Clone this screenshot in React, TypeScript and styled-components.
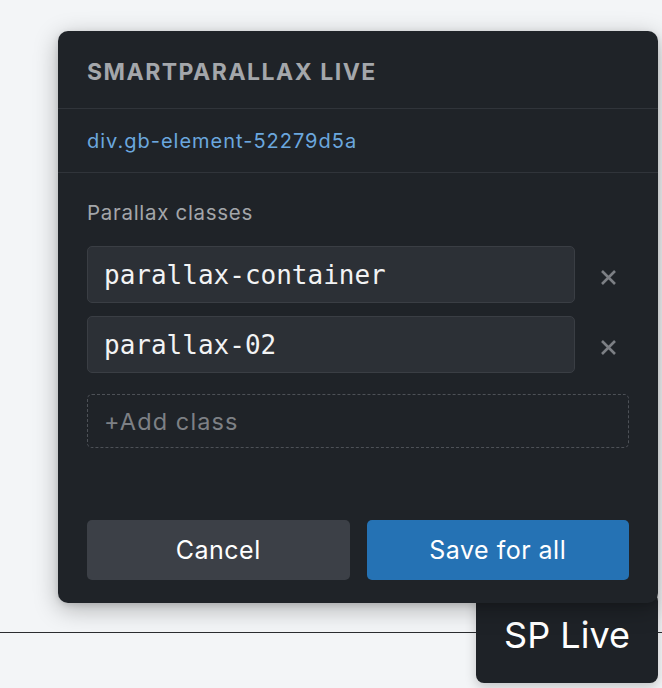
import React, { useState } from "react";
import styled, { createGlobalStyle } from "styled-components";

const GlobalStyle = createGlobalStyle`
    html, body {
        margin: 0;
        padding: 0;
        background: #f3f5f7;
        font-family: Inter, "Liberation Sans", sans-serif;
    }
`;

const Page = styled.div`
    position: relative;
    width: 662px;
    height: 688px;
    overflow: hidden;
`;

const Rule = styled.div`
    padding-top: 632px;
    border-bottom: 1.5px solid #2b2d30;
`;

const Panel = styled.div`
    position: absolute;
    top: 31px;
    left: 58px;
    width: 600px;
    height: 572px;
    display: flex;
    flex-direction: column;
    background: #1f2328;
    border-radius: 10px;
    box-shadow: 0 6px 24px rgba(0, 0, 0, 0.28), 0 2px 6px rgba(0, 0, 0, 0.12);
    z-index: 2;
`;

const Header = styled.div`
    display: flex;
    align-items: center;
    height: 73px;
    padding: 4px 29px 0;
    border-bottom: 1.5px solid #30343a;
    font-size: 23px;
    font-weight: 700;
    letter-spacing: 1.5px;
    color: #a4a7ab;
    text-transform: uppercase;
`;

const Selector = styled.div`
    display: flex;
    align-items: center;
    height: 63px;
    padding: 0 29px;
    border-bottom: 1.5px solid #30343a;
    font-size: 20px;
    letter-spacing: 1px;
    color: #6ba7de;
`;

const Body = styled.div`
    display: flex;
    flex-direction: column;
    flex: 1;
    padding: 27px 29px 23px;
`;

const Label = styled.div`
    font-size: 20.5px;
    letter-spacing: 0.7px;
    color: #a3a6aa;
    line-height: 26px;
    margin-bottom: 20px;
`;

const ClassList = styled.div`
    display: flex;
    flex-direction: column;
    gap: 13px;
`;

const ClassRow = styled.div`
    display: flex;
    align-items: center;
`;

const ClassInput = styled.div`
    display: flex;
    align-items: center;
    flex-shrink: 0;
    width: 488px;
    height: 57px;
    box-sizing: border-box;
    padding: 0 16px;
    background: #2c3036;
    border: 1.5px solid #3a3e44;
    border-radius: 5px;
    font-family: "DejaVu Sans Mono", "Liberation Mono", monospace;
    font-size: 26px;
    color: #f2f3f4;
`;

const RemoveButton = styled.button`
    display: flex;
    align-items: center;
    justify-content: flex-start;
    width: 54px;
    height: 57px;
    padding: 6px 0 0 26px;
    border: none;
    background: transparent;
    color: #7c7f84;
    cursor: pointer;
`;

const AddClass = styled.div`
    display: flex;
    align-items: center;
    height: 54px;
    margin-top: 21px;
    box-sizing: border-box;
    padding: 0 16px;
    border: 1.5px dashed #4d5157;
    border-radius: 5px;
    font-size: 23.5px;
    letter-spacing: 1.1px;
    color: #7d8085;
`;

const Footer = styled.div`
    display: flex;
    gap: 17px;
    margin-top: auto;
`;

const ActionButton = styled.button<{ $primary?: boolean }>`
    flex: 1;
    height: 60px;
    border: none;
    border-radius: 5px;
    background: ${(p) => (p.$primary ? "#2572b4" : "#3c4047")};
    color: #ffffff;
    font-family: Inter, "Liberation Sans", sans-serif;
    font-size: 25px;
    letter-spacing: 0.5px;
    cursor: pointer;
`;

const Launcher = styled.button`
    position: absolute;
    right: 4px;
    bottom: 5px;
    width: 182px;
    height: 90px;
    display: flex;
    align-items: flex-end;
    justify-content: center;
    padding: 0 0 26px;
    border: none;
    border-radius: 8px;
    background: #1e2227;
    color: #ffffff;
    font-family: Inter, "Liberation Sans", sans-serif;
    font-size: 36px;
    z-index: 1;
    box-shadow: 0 4px 12px rgba(0, 0, 0, 0.2);
`;

const CloseIcon = () => (
    <svg width="15" height="15" viewBox="0 0 15 15">
        <path d="M1 1 L14 14 M14 1 L1 14" stroke="currentColor" strokeWidth="2.6" />
    </svg>
);

const App = () => {
    const [classes, setClasses] = useState(["parallax-container", "parallax-02"]);
    return (
        <Page>
            <GlobalStyle />
            <Rule />
            <Launcher>SP Live</Launcher>
            <Panel>
                <Header>SmartParallax Live</Header>
                <Selector>div.gb-element-52279d5a</Selector>
                <Body>
                    <Label>Parallax classes</Label>
                    <ClassList>
                        {classes.map((name) => (
                            <ClassRow key={name}>
                                <ClassInput>{name}</ClassInput>
                                <RemoveButton onClick={() => setClasses(classes.filter((c) => c !== name))}>
                                    <CloseIcon />
                                </RemoveButton>
                            </ClassRow>
                        ))}
                    </ClassList>
                    <AddClass>+Add class</AddClass>
                    <Footer>
                        <ActionButton>Cancel</ActionButton>
                        <ActionButton $primary>Save for all</ActionButton>
                    </Footer>
                </Body>
            </Panel>
        </Page>
    );
};

export default App;
